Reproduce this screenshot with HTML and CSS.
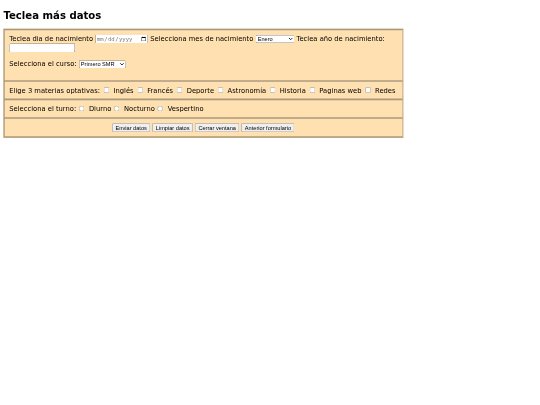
FILE: index.html
```html
<!DOCTYPE html>
<html lang="es">
<head>
    <meta charset="UTF-8">
    <title>Teclea más datos</title>
    <link rel="stylesheet" href="styles.css">
</head>
<body>
    <h2>Teclea más datos</h2>
    <form class="formulario">
        <fieldset>
            <p>
                Teclea dia de nacimiento <input type="date">
                Selecciona mes de nacimiento
                <select class="mes"><option>Enero</option></select>
                Teclea año de nacimiento: <input type="text">
            </p>
            <p>Selecciona el curso: <select class="curso"><option>Primero SMR</option></select></p>
        </fieldset>
        <fieldset>
            Elige 3 materias optativas:
            <label><input type="checkbox"> Inglés</label>
            <label><input type="checkbox"> Francés</label>
            <label><input type="checkbox"> Deporte</label>
            <label><input type="checkbox"> Astronomía</label>
            <label><input type="checkbox"> Historia</label>
            <label><input type="checkbox"> Paginas web</label>
            <label><input type="checkbox"> Redes</label>
        </fieldset>
        <fieldset>
            Selecciona el turno:
            <label><input type="radio" name="turno"> Diurno</label>
            <label><input type="radio" name="turno"> Nocturno</label>
            <label><input type="radio" name="turno"> Vespertino</label>
        </fieldset>
        <fieldset class="botones">
            <input type="button" value="Enviar datos">
            <input type="button" value="Limpiar datos">
            <input type="button" value="Cerrar ventana">
            <input type="button" value="Anterior formulario">
        </fieldset>
    </form>
</body>
</html>
```

FILE: styles.css
```css
html {
    overflow: hidden;
    height: 100%;
}

/* the page is laid out at 1280 wide and shrunk to the 540 window */
body {
    box-sizing: border-box;
    width: 1280px;
    margin: 0;
    padding: 8px;
    transform: scale(0.421875);
    transform-origin: 0 0;
    filter: blur(0.8px);
    font-family: "DejaVu Sans", Verdana, sans-serif;
    font-size: 16px;
    color: #000;
    background: #fff;
}

h2 {
    font-size: 24px;
    margin: 15px 0 17px;
}

.formulario {
    box-sizing: border-box;
    width: 75%;
    background: #ffe0b0;
    border: 2px solid #b0a080;
}

fieldset {
    margin: 0;
    padding: 10px;
    border: 2px groove #c0b090;
}

fieldset p {
    margin: 0 0 18px;
}

input[type="checkbox"] {
    margin: 3px 5px 3px 4px;
}

input[type="radio"] {
    margin: 3px 6px 3px 1px;
}

input[type="date"] {
    color: #777;
}

input[type="text"] {
    box-sizing: border-box;
    width: 156px;
}

.mes {
    width: 92px;
}

.curso {
    width: 111px;
}

.botones {
    text-align: center;
}
```
